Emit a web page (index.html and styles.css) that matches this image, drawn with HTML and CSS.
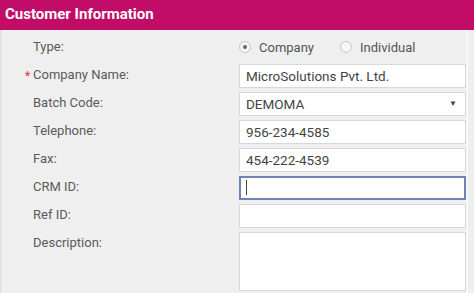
FILE: index.html
```html
<!DOCTYPE html>
<html lang="en">
<head>
    <meta charset="UTF-8">
    <meta name="viewport" content="width=device-width, initial-scale=1.0">
    <title>Customer Information</title>
    <link rel="stylesheet" href="styles.css">
</head>
<body>
    <div class="panel">
        <h1 class="panel-title">Customer Information</h1>
        <form class="customer-form">
            <label class="field-label">Type:</label>
            <div class="radio-row">
                <label class="radio"><span class="radio-dot checked"></span>Company</label>
                <label class="radio"><span class="radio-dot"></span>Individual</label>
            </div>

            <label class="field-label required">Company Name:</label>
            <input class="field" type="text" value="MicroSolutions Pvt. Ltd.">

            <label class="field-label">Batch Code:</label>
            <div class="field select">DEMOMA<span class="caret">&#9660;</span></div>

            <label class="field-label">Telephone:</label>
            <input class="field" type="text" value="956-234-4585">

            <label class="field-label">Fax:</label>
            <input class="field" type="text" value="454-222-4539">

            <label class="field-label">CRM ID:</label>
            <div class="field focused"><span class="cursor"></span></div>

            <label class="field-label">Ref ID:</label>
            <input class="field" type="text">

            <label class="field-label">Description:</label>
            <textarea class="field area"></textarea>
        </form>
    </div>
</body>
</html>
```

FILE: styles.css
```css
body {
    margin: 0;
    font-family: Roboto, "Liberation Sans", sans-serif;
    background: #efefef;
    color: #555;
}

.panel {
    width: 474px;
    height: 293px;
    overflow: hidden;
}

.panel-title {
    margin: 0;
    height: 30px;
    background: #c10c68;
    color: #fff;
    font-size: 15px;
    font-weight: bold;
    line-height: 28px;
    padding-left: 5px;
}

.customer-form {
    display: grid;
    grid-template-columns: 206px 227px;
    grid-auto-rows: 24px;
    row-gap: 4px;
    padding: 6px 0 0 31px;
    margin-right: 6px;
    border-left: 2px solid #e2e2e2;
    border-right: 2px solid #f8f8f8;
    box-sizing: border-box;
    height: 263px;
}

.field-label {
    font-size: 13px;
    line-height: 22px;
    color: #5a5a5a;
    position: relative;
}

.required::before {
    content: "*";
    color: #e0303a;
    position: absolute;
    left: -8px;
    top: 1px;
    font-size: 12px;
}

.radio-row {
    display: flex;
    gap: 26px;
    font-size: 13px;
    align-items: center;
    height: 24px;
    margin-top: -1px;
}

.radio {
    display: flex;
    align-items: center;
    gap: 8px;
}

.radio-dot {
    width: 12px;
    height: 12px;
    border-radius: 50%;
    border: 1px solid #c6c6c6;
    background: #f6f6f6;
    box-sizing: border-box;
    position: relative;
}

.radio-dot.checked::after {
    content: "";
    position: absolute;
    left: 3px;
    top: 3px;
    width: 4px;
    height: 4px;
    border-radius: 50%;
    background: #666;
}

.field {
    display: block;
    width: 227px;
    height: 24px;
    margin: 0;
    padding: 0 6px;
    border: 1px solid #d8d8d8;
    background: #fff;
    font-family: inherit;
    font-size: 13.5px;
    color: #444;
    line-height: 22px;
    box-sizing: border-box;
    outline: none;
}

.select {
    position: relative;
}

.caret {
    position: absolute;
    right: 8px;
    top: 0;
    font-size: 8px;
    color: #444;
}

.focused {
    border: 2px solid #6f84b5;
    padding-left: 5px;
}

.cursor {
    display: inline-block;
    width: 1px;
    height: 15px;
    margin-top: 2px;
    background: #444;
    vertical-align: top;
}

.area {
    height: 59px;
    resize: none;
}
```
